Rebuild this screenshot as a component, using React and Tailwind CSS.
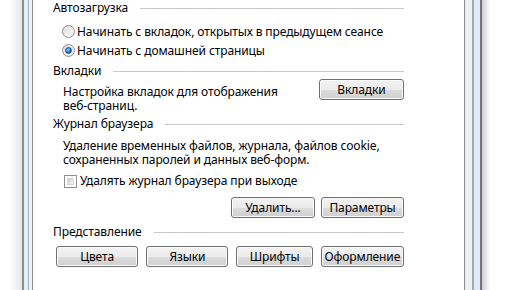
import React from 'react';

const font = { fontFamily: '"Noto Sans", "Liberation Sans", sans-serif' };

// Win7-style push button
const Btn = ({ w, children }) => (
    <div
        className={`${w} h-[21px] flex items-center justify-center rounded-[3px] border border-[#707070] bg-[linear-gradient(#f2f2f2_0%,#ebebeb_50%,#dddddd_51%,#cfcfcf_100%)] shadow-[inset_0_0_0_1px_#fbfbfb] text-[12px] text-black`}
    >
        {children}
    </div>
);

const Radio = ({ checked }) => (
    <div className="w-[13px] h-[13px] rounded-full border border-[#8e8f8f] bg-[linear-gradient(135deg,#dcdcdc,#fdfdfd)] flex items-center justify-center">
        {checked && (
            <div className="w-[7px] h-[7px] rounded-full border border-[#1c4f8a] bg-[radial-gradient(circle_at_40%_35%,#8fd0ff,#1a6fc4_60%,#0b3f7e)]" />
        )}
    </div>
);

const Checkbox = () => (
    <div className="w-[13px] h-[13px] border border-[#8e8f8f] bg-white p-[2px]">
        <div className="w-full h-full bg-[linear-gradient(135deg,#cbcfd5,#f6f6f6)] border border-[#d6d6d6]" />
    </div>
);

const GroupHeader = ({ title }) => (
    <div className="h-[16px] flex items-center">
        <span className="leading-[16px] whitespace-nowrap">{title}</span>
        <div className="flex-1 ml-[12px] h-px bg-[#c9c9c9]" />
    </div>
);

export default function App() {
    return (
        <div className="w-[516px] h-[290px] overflow-hidden flex bg-white text-[12px] tracking-[-0.1px] text-black" style={font}>
            {/* left window frame */}
            <div className="w-[22px] bg-[linear-gradient(90deg,#ffffff,#ffffff_40%,#e6e6e6)]" />
            <div className="w-[2px] bg-[#8a8e94]" />
            <div className="w-[4px] bg-[#e3edf8]" />
            <div className="w-px bg-[#a9b0b8]" />
            <div className="w-[3px] bg-[#f0f0f0]" />
            <div className="w-px bg-[#898c95]" />

            {/* tab page */}
            <div className="w-[431px] bg-white pl-[20px]">
                <div className="w-[351px]">
                    <GroupHeader title="Автозагрузка" />
                    <div className="mt-[6px] pl-[9px]">
                        <div className="h-[19px] flex items-center gap-[2px]">
                            <Radio />
                            <span>Начинать с вкладок, открытых в предыдущем сеансе</span>
                        </div>
                        <div className="h-[19px] flex items-center gap-[2px]">
                            <Radio checked />
                            <span>Начинать с домашней страницы</span>
                        </div>
                    </div>

                    <div className="mt-[3px]">
                        <GroupHeader title="Вкладки" />
                    </div>
                    <div className="flex justify-between items-start">
                        <div className="pl-[10px] pt-[6px] leading-[14px]">
                            <div>Настройка вкладок для отображения</div>
                            <div>веб-страниц.</div>
                        </div>
                        <Btn w="w-[85px]">Вкладки</Btn>
                    </div>

                    <div className="mt-[3px]">
                        <GroupHeader title="Журнал браузера" />
                    </div>
                    <div className="pl-[10px] mt-[7px] leading-[14px]">
                        <div>Удаление временных файлов, журнала, файлов cookie,</div>
                        <div>сохраненных паролей и данных веб-форм.</div>
                    </div>
                    <div className="mt-[5px] pl-[11px] h-[18px] flex items-center gap-[3px]">
                        <Checkbox />
                        <span>Удалять журнал браузера при выходе</span>
                    </div>
                    <div className="mt-[7px] flex justify-end gap-[6px]">
                        <Btn w="w-[84px]">Удалить...</Btn>
                        <Btn w="w-[83px]">Параметры</Btn>
                    </div>

                    <div className="mt-[6px]">
                        <GroupHeader title="Представление" />
                    </div>
                    <div className="mt-[6px] flex gap-[8px] pl-[3px]">
                        <Btn w="w-[83px]">Цвета</Btn>
                        <Btn w="w-[83px]">Языки</Btn>
                        <Btn w="w-[77px]">Шрифты</Btn>
                        <Btn w="w-[84px]">Оформление</Btn>
                    </div>
                </div>
            </div>

            {/* right window frame */}
            <div className="w-px bg-[#898c95]" />
            <div className="w-[7px] bg-[#f0f0f0]" />
            <div className="w-[2px] bg-[#a3a9b1]" />
            <div className="w-[6px] bg-[#dfeaf6]" />
            <div className="w-[2px] bg-[#6f747b]" />
            <div className="w-[8px] bg-[linear-gradient(90deg,#cfcfcf,#ffffff)]" />
            <div className="flex-1 bg-white" />
        </div>
    );
}
